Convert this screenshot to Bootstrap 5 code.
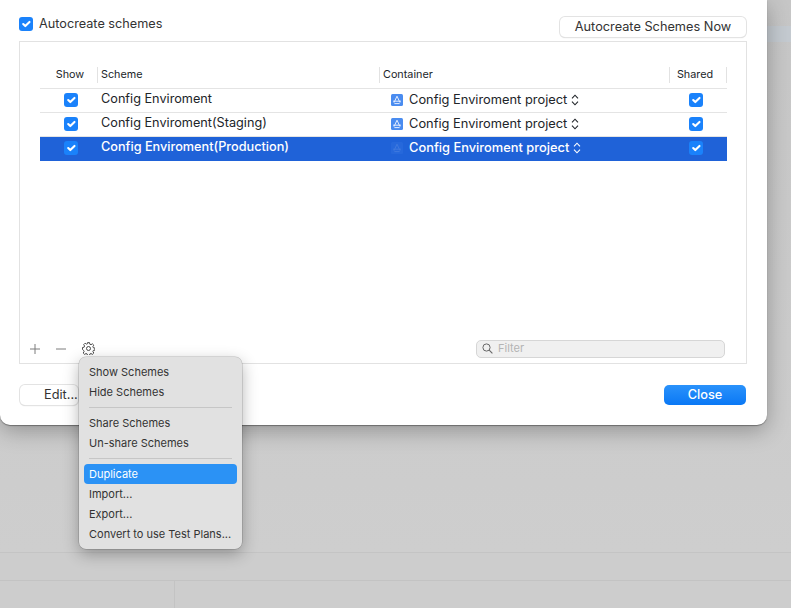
<!DOCTYPE html>
<html lang="en">
<head>
    <meta charset="UTF-8">
    <title>Manage Schemes</title>
    <meta name="viewport" content="width=device-width, initial-scale=1">
    <link href="https://cdn.jsdelivr.net/npm/bootstrap@5.3.3/dist/css/bootstrap.min.css" rel="stylesheet">
    <style>
        html, body { height: 100%; }
        body {
            background: #cdcdcd;
            font-family: "Inter", "Liberation Sans", sans-serif;
            font-size: 12px;
            color: #333;
            overflow: hidden;
        }
        .stage { position: relative; width: 791px; height: 608px; overflow: hidden; }
        .backdrop-top { height: 553px; background: linear-gradient(#c6c6c6, #cecece); border-bottom: 1px solid #c4c4c4; }
        .backdrop-mid { height: 28px; border-bottom: 1px solid #c3c3c3; }
        .backdrop-low { height: 27px; }
        .backdrop-cell { width: 175px; height: 100%; border-right: 1px solid #c3c3c3; }
        .side-strip { position: absolute; left: 767px; top: 26px; width: 24px; height: 16px; background: #c4cad0; }
        .sheet {
            position: absolute; left: 0; top: 0;
            width: 767px; height: 425px;
            background: #fff;
            border-radius: 0 0 10px 10px;
            box-shadow: 0 1px 1px rgba(0,0,0,.35), 0 6px 22px rgba(0,0,0,.28);
            padding: 16px 20px 0 19px;
        }
        .top-row { height: 25px; }
        .top-label { font-size: 12.7px; line-height: 15px; gap: 6px; }
        .mac-check.form-check-input {
            width: 14px; height: 14px; margin: 0; float: none; flex: none;
            border: 0; border-radius: 3px;
            background-color: #1a82fb;
            background-size: 14px;
            opacity: 1;
        }
        .mac-btn {
            background: #fff; border: 0; border-radius: 5px;
            box-shadow: 0 0 0 1px #e3e3e3, 0 1px 1px rgba(0,0,0,.2);
            font-size: 12.75px; color: #333; padding: 0; height: 20px; line-height: 20px;
        }
        .now-btn { width: 186px; margin: 1px 1px 0 0; }
        .edit-btn { width: 58px; margin-left: 1px; text-align: left; padding-left: 24px; }
        .close-btn {
            width: 82px; height: 20px; line-height: 20px; margin-right: 1px; border: 0; border-radius: 5px;
            background: linear-gradient(#2a92fb, #0a78f5); color: #fff;
            font-size: 12.75px; font-weight: 500; padding: 0;
        }
        .scheme-panel {
            height: 323px; border: 1px solid #e2e2e2;
            padding: 22px 19px 0 20px;
        }
        .scheme-table { width: 687px; table-layout: fixed; margin: 0; border-collapse: collapse; }
        .scheme-table th, .scheme-table td {
            padding: 0; background: transparent; color: inherit; box-shadow: none;
            border: 0; border-bottom: 1px solid #e4e4e4; vertical-align: middle;
        }
        .scheme-table th { height: 24px; font-size: 10.8px; font-weight: 400; vertical-align: top; padding-top: 3px; }
        .scheme-table td { height: 24px; font-size: 12.7px; }
        .head-cell { display: block; height: 16px; line-height: 16px; padding-left: 3px; border-left: 1px solid #e2e2e2; }
        .head-show { text-align: center; border: 0; padding: 0 0 0 3px; }
        .head-shared { text-align: center; border-right: 1px solid #e2e2e2; padding: 0 6px 0 0; }
        .scheme-name { padding-left: 4px; display: block; margin-top: -2px; }
        .box-cell { text-align: center; }
        .box-show { padding-left: 5px !important; }
        .box-shared { padding-right: 4px !important; }
        .box-cell .mac-check { display: inline-block; vertical-align: middle; margin-bottom: 2px; }
        .container-cell { padding-left: 12px; gap: 6px; font-size: 12.85px; }
        .updown { margin-left: -2px; }
        .scheme-table tr.row-selected td { background: #1f62d8; color: #fff; border-bottom-color: #1f62d8; font-weight: 500; }
        .row-selected .app-icon { opacity: .16; }
        .panel-foot { height: 28px; margin-top: 174px; }
        .tool-icon { color: #7c7c7c; }
        .tool-first { margin-left: -11px; }
        .filter-box {
            width: 249px; height: 18px; margin-left: auto; margin-right: 2px;
            background: #f0f0f0; border: 1px solid #d6d6d6; border-radius: 5px;
            font-size: 11px; color: #b4b4b4; padding-left: 5px; gap: 5px;
        }
        .sheet-foot { margin-top: 21px; height: 22px; }
        .gear-menu {
            position: absolute; left: 79px; top: 356.5px;
            width: 163px; height: 192.5px;
            background: #e1e1e1; border-radius: 7px;
            box-shadow: 0 0 0 .5px rgba(0,0,0,.22), 0 5px 16px rgba(0,0,0,.3);
            padding: 5.5px 5px;
            font-size: 11px; color: #333;
        }
        .menu-line { height: 20px; line-height: 20px; padding-left: 5px; border-radius: 4px; white-space: nowrap; }
        .menu-active { background: #2b92f5; color: #fff; }
        .menu-sep { height: 1px; background: #c6c6c6; margin: 5px; }
    </style>
</head>
<body>
    <svg width="0" height="0" class="d-block">
        <symbol id="app" viewBox="0 0 12 12">
            <rect width="12" height="12" rx="1.5" fill="#4a8cf0"/>
            <path d="M6 2.2 3 8.6M6 2.2 9 8.6M2 7.2h8M3.4 9.6h5.2" stroke="#e4edff" stroke-width="1" fill="none"/>
        </symbol>
        <symbol id="updown" viewBox="0 0 8 12">
            <path d="M1 4.4 4 1.2 7 4.4M1 7.6 4 10.8 7 7.6" stroke="currentColor" stroke-width="1.1" fill="none"/>
        </symbol>
    </svg>

    <div class="stage">
        <!-- window behind the sheet -->
        <div class="backdrop-top"></div>
        <div class="backdrop-mid"></div>
        <div class="backdrop-low"><div class="backdrop-cell"></div></div>
        <div class="side-strip"></div>

        <div class="sheet">
            <div class="top-row d-flex justify-content-between align-items-start">
                <label class="d-flex align-items-center top-label">
                    <input class="form-check-input mac-check" type="checkbox" checked>
                    <span>Autocreate schemes</span>
                </label>
                <button class="mac-btn now-btn" type="button">Autocreate Schemes Now</button>
            </div>

            <div class="scheme-panel">
                <table class="table scheme-table">
                    <colgroup><col style="width:57px"><col style="width:282px"><col style="width:290px"><col style="width:58px"></colgroup>
                    <thead>
                        <tr>
                            <th><span class="head-cell head-show">Show</span></th>
                            <th><span class="head-cell">Scheme</span></th>
                            <th><span class="head-cell">Container</span></th>
                            <th><span class="head-cell head-shared">Shared</span></th>
                        </tr>
                    </thead>
                    <tbody>
                        <tr>
                            <td class="box-cell box-show"><input class="form-check-input mac-check" type="checkbox" checked></td>
                            <td><span class="scheme-name">Config Enviroment</span></td>
                            <td><div class="d-flex align-items-center container-cell"><svg width="12" height="12"><use href="#app"/></svg><span>Config Enviroment project</span><svg class="updown" width="8" height="12"><use href="#updown"/></svg></div></td>
                            <td class="box-cell box-shared"><input class="form-check-input mac-check" type="checkbox" checked></td>
                        </tr>
                        <tr>
                            <td class="box-cell box-show"><input class="form-check-input mac-check" type="checkbox" checked></td>
                            <td><span class="scheme-name">Config Enviroment(Staging)</span></td>
                            <td><div class="d-flex align-items-center container-cell"><svg width="12" height="12"><use href="#app"/></svg><span>Config Enviroment project</span><svg class="updown" width="8" height="12"><use href="#updown"/></svg></div></td>
                            <td class="box-cell box-shared"><input class="form-check-input mac-check" type="checkbox" checked></td>
                        </tr>
                        <tr class="row-selected">
                            <td class="box-cell box-show"><input class="form-check-input mac-check" type="checkbox" checked></td>
                            <td><span class="scheme-name">Config Enviroment(Production)</span></td>
                            <td><div class="d-flex align-items-center container-cell"><svg class="app-icon" width="12" height="12"><use href="#app"/></svg><span>Config Enviroment project</span><svg class="updown" width="8" height="12"><use href="#updown"/></svg></div></td>
                            <td class="box-cell box-shared"><input class="form-check-input mac-check" type="checkbox" checked></td>
                        </tr>
                    </tbody>
                </table>

                <div class="panel-foot d-flex align-items-center">
                    <svg class="tool-icon tool-first" width="12" height="12" viewBox="0 0 12 12"><path d="M6 1v10M1 6h10" stroke="currentColor" stroke-width="1"/></svg>
                    <svg class="tool-icon" style="margin-left:14px" width="12" height="12" viewBox="0 0 12 12"><path d="M1 6h10" stroke="currentColor" stroke-width="1"/></svg>
                    <svg style="margin-left:15px" width="13" height="13" viewBox="0 0 13 13"><path d="M5.5.8h2l.3 1.6 1.2.5 1.4-.9 1.4 1.4-.9 1.4.5 1.2 1.6.3v2l-1.6.3-.5 1.2.9 1.4-1.4 1.4-1.4-.9-1.2.5-.3 1.6h-2l-.3-1.6-1.2-.5-1.4.9-1.4-1.4.9-1.4-.5-1.2L.5 7.7v-2l1.6-.3.5-1.2-.9-1.4 1.4-1.4 1.4.9 1.2-.5z" transform="translate(0 -.2)" fill="none" stroke="#3a3a3a" stroke-width=".9"/><circle cx="6.5" cy="6.5" r="2" fill="none" stroke="#3a3a3a" stroke-width=".9"/></svg>
                    <div class="filter-box d-flex align-items-center">
                        <svg width="11" height="11" viewBox="0 0 11 11"><circle cx="4.5" cy="4.5" r="3.6" fill="none" stroke="#666" stroke-width="1"/><path d="M7.2 7.2 10.4 10.4" stroke="#666" stroke-width="1.1"/></svg>
                        <span>Filter</span>
                    </div>
                </div>
            </div>

            <div class="sheet-foot d-flex justify-content-between align-items-start">
                <button class="mac-btn edit-btn" type="button">Edit...</button>
                <button class="close-btn" type="button">Close</button>
            </div>
        </div>

        <div class="gear-menu">
            <div class="menu-line">Show Schemes</div>
            <div class="menu-line">Hide Schemes</div>
            <div class="menu-sep"></div>
            <div class="menu-line">Share Schemes</div>
            <div class="menu-line">Un-share Schemes</div>
            <div class="menu-sep"></div>
            <div class="menu-line menu-active">Duplicate</div>
            <div class="menu-line">Import...</div>
            <div class="menu-line">Export...</div>
            <div class="menu-line">Convert to use Test Plans...</div>
        </div>
    </div>
    <script src="https://cdn.jsdelivr.net/npm/bootstrap@5.3.3/dist/js/bootstrap.bundle.min.js"></script>
</body>
</html>
